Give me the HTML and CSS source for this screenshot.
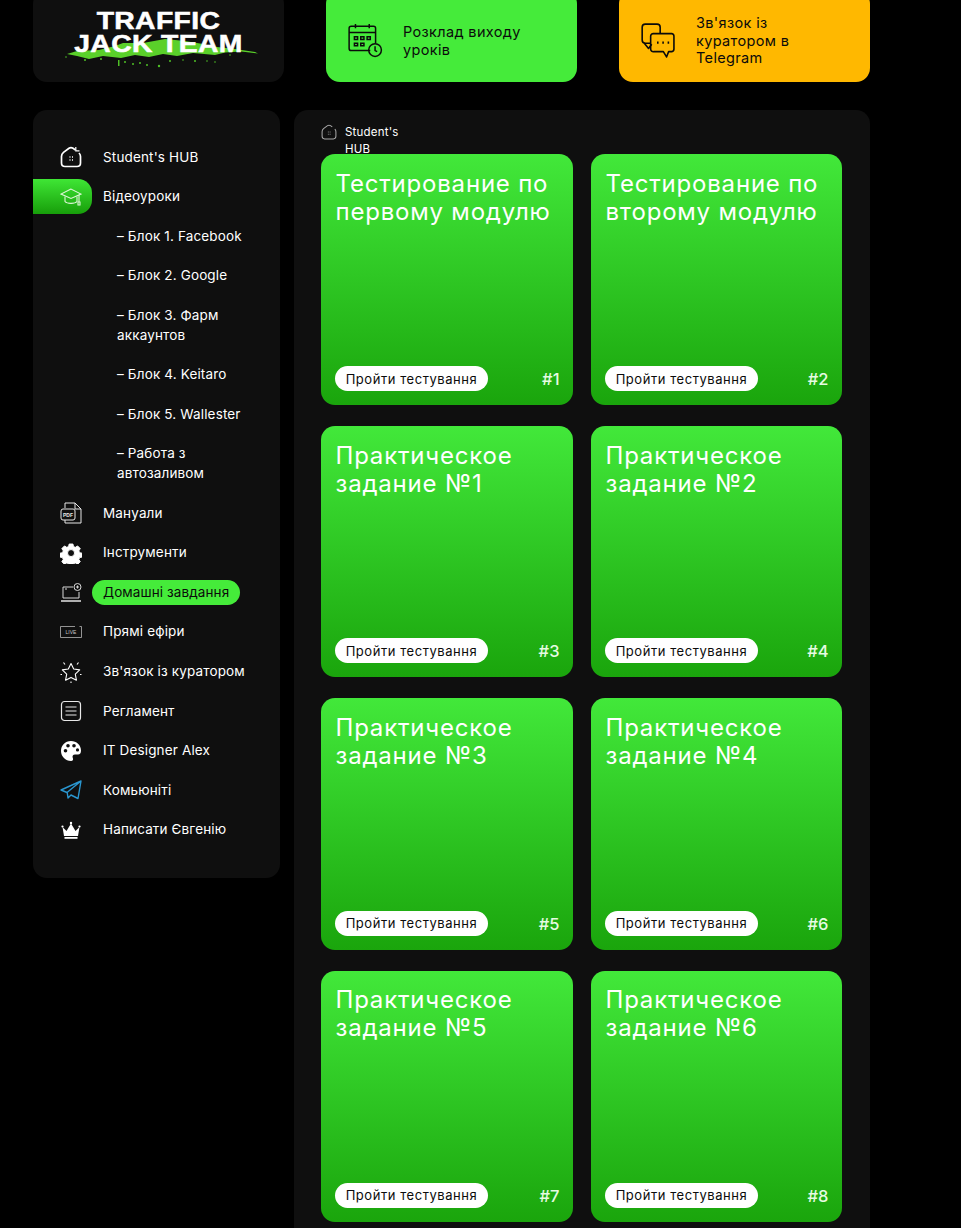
FILE: index.html
```html
<!DOCTYPE html>
<html lang="uk">
<head>
<meta charset="utf-8">
<title>Traffic Jack Team</title>
<link rel="stylesheet" href="styles.css">
</head>
<body>
<div class="page">
  <header class="top">
    <div class="logo">
      <svg class="brush" viewBox="0 0 195 30" aria-hidden="true">
        <path d="M2 16 L12 13 L34 12 L50 8 L58 5 L78 5 L100 1 L120 3 L138 6 L152 9 L170 11 L190 14 L193 15.500 L176 13.500 L160 14.500 L150 17 L128 15 L112 18 L98 16 L84 19 L70 17 L56 20 L38 18 L24 21 L12 18 Z" fill="#5ad02a"/>
        <g fill="#4fc026">
          <rect x="53" y="22" width="1.500" height="6"/><circle cx="60" cy="24" r="1"/><circle cx="68" cy="26" r="1"/><circle cx="75" cy="25" r="1"/><circle cx="82" cy="27" r="1"/><circle cx="94" cy="28" r="1.200"/><circle cx="105" cy="23" r="1"/><circle cx="118" cy="22" r=".8"/><circle cx="130" cy="23" r="1"/><circle cx="142" cy="23" r=".8"/><circle cx="150" cy="24" r=".8"/><circle cx="1" cy="19" r=".8"/><circle cx="20" cy="22" r="1"/><circle cx="36" cy="21" r="1"/><circle cx="165" cy="17" r=".8"/>
        </g>
      </svg>
      <div class="logo-text">TRAFFIC<br>JACK TEAM</div>
    </div>
    <a class="banner banner-green">
      <svg class="banner-icon" viewBox="0 0 34 34" fill="none" stroke="#0b0b0b" stroke-width="1.400" aria-hidden="true">
        <path d="M22 27H4a2 2 0 0 1-2-2V6a2 2 0 0 1 2-2h21a2 2 0 0 1 2 2v14"/>
        <path d="M2 10h25M8 2v4M21 2v4"/>
        <path d="M7 14h3v2.500H7zM13 14h3v2.500h-3zM19 14h3v2.500h-3zM7 20h3v2.500H7zM13 20h3v2.500h-3z"/>
        <circle cx="26.500" cy="26.500" r="6"/><path d="M26.500 23v4l2 1"/>
      </svg>
      <span class="banner-text banner-text-two">Розклад виходу уроків</span>
    </a>
    <a class="banner banner-orange">
      <svg class="banner-icon" viewBox="0 0 34 34" fill="none" stroke="#0b0b0b" stroke-width="1.500" stroke-linejoin="round" aria-hidden="true">
        <path d="M11 20H6a3 3 0 0 1-3-3V5a3 3 0 0 1 3-3h11a3 3 0 0 1 3 3v6"/>
        <path d="M5 20l4 5 3-4"/>
        <path d="M14 11h17a2.500 2.500 0 0 1 2 2.500v12a2.500 2.500 0 0 1-2 2.500h-3l-2 5-3-5h-9a2.500 2.500 0 0 1-3-2.500v-12a2.500 2.500 0 0 1 3-2.500z"/>
        <path d="M17 19.500h1.500M22 19.500h1.500M27 19.500h1.500" stroke-width="2"/>
      </svg>
      <span class="banner-text banner-text-three">Зв'язок із куратором в Telegram</span>
    </a>
  </header>

  <div class="columns">
    <nav class="side">
      <div class="row">
        <span class="cell"><svg class="ico" viewBox="0 0 22 22" fill="none" stroke="#fff" stroke-width="1.700" aria-hidden="true"><path d="M15.500 4 13 2.300Q11 1 9 2.300L3.500 6.300Q1.500 8 1.500 10.500V17Q1.500 20.500 5 20.500H17Q20.500 20.500 20.500 17V10.500Q20.500 8.500 19 7"/><path d="M15.800 1v3.800H19.500" stroke-width="1.200"/><path d="M9.500 11h1M12 11h1M9.500 14h1M12 14h1" stroke-width="1.400"/></svg></span>
        <span class="label">Student's HUB</span>
      </div>
      <div class="row">
        <span class="cell cell-active"><svg class="ico" viewBox="0 0 22 22" fill="none" stroke="#dff7d8" stroke-width="1.100" aria-hidden="true"><path d="M11 3 1 8l10 4.500L21 8z"/><path d="M5 10.500v5c2 2.500 10 2.500 12 0v-5"/><path d="M19 9v7M18 19h2v-3h-2z"/></svg></span>
        <span class="label">Відеоуроки</span>
      </div>
      <div class="sub">– Блок 1. Facebook</div>
      <div class="sub">– Блок 2. Google</div>
      <div class="sub">– Блок 3. Фарм<br>аккаунтов</div>
      <div class="sub">– Блок 4. Keitaro</div>
      <div class="sub">– Блок 5. Wallester</div>
      <div class="sub">– Работа з<br>автозаливом</div>
      <div class="row">
        <span class="cell"><svg class="ico" viewBox="0 0 22 22" fill="none" stroke="#e8e8e8" stroke-width="1" aria-hidden="true"><path d="M5 6V1h10l6 6v14H5v-3"/><path d="M15 1v6h6"/><rect x="1" y="7" width="14" height="11" rx="2"/><text x="8" y="14.500" text-anchor="middle" class="ico-text ico-bold" fill="#e8e8e8" stroke="none">PDF</text></svg></span>
        <span class="label">Мануали</span>
      </div>
      <div class="row">
        <span class="cell"><svg class="ico" viewBox="0 0 22 22" aria-hidden="true"><path fill="#fff" fill-rule="evenodd" stroke="#fff" stroke-width="1" stroke-linejoin="round" d="M9 1.500h4l.6 2.700 1.900.8 2.400-1.500 2.800 2.800-1.500 2.400.8 1.900 2.700.6v4l-2.700.6-.8 1.900 1.500 2.400-2.800 2.800-2.400-1.500-1.900.8-.6 2.700H9l-.6-2.700-1.900-.8-2.400 1.500-2.800-2.800 1.500-2.400-.8-1.900-2.700-.6v-4l2.700-.6.8-1.900-1.500-2.400 2.800-2.800 2.400 1.500 1.900-.8zM11 7.300a3.700 3.700 0 1 0 0 7.400 3.700 3.700 0 0 0 0-7.400z" transform="translate(.6 .6) scale(.95)"/></svg></span>
        <span class="label">Інструменти</span>
      </div>
      <div class="row">
        <span class="cell"><svg class="ico" viewBox="0 0 22 22" fill="none" stroke="#d8d8d8" stroke-width="1" aria-hidden="true"><path d="M13 5H3v11h16v-6"/><path d="M1 19h20" stroke-width="1.600"/><circle cx="17.500" cy="5" r="3.500"/><path d="M17.500 3.500v3M16 5h3"/><path d="M5 7h2"/></svg></span>
        <span class="label label-pill">Домашні завдання</span>
      </div>
      <div class="row">
        <span class="cell"><svg class="ico" viewBox="0 0 22 22" fill="none" stroke="#b5b5b5" stroke-width=".8" aria-hidden="true"><path d="M15 5.500H.5v11h21v-11h-2"/><text x="11" y="13" text-anchor="middle" class="ico-text" fill="#c5c5c5" stroke="none">LIVE</text></svg></span>
        <span class="label">Прямі ефіри</span>
      </div>
      <div class="row">
        <span class="cell"><svg class="ico" viewBox="0 0 22 22" fill="none" stroke="#fff" stroke-width="1.100" stroke-linejoin="round" aria-hidden="true"><path d="M11 2.500l2.700 5.500 6 .9-4.400 4.300 1.100 6L11 16.400l-5.400 2.800 1.100-6-4.400-4.300 6-.9z"/><path d="M3.500 1.500l1.500 2M18.500 1.500l-1.500 2M.5 13.500h1.500M20 13.500h1.500M11 20.500V22"/></svg></span>
        <span class="label">Зв'язок із куратором</span>
      </div>
      <div class="row">
        <span class="cell"><svg class="ico" viewBox="0 0 22 22" fill="none" stroke="#e8e8e8" stroke-width="1.200" aria-hidden="true"><rect x="1.500" y="1.500" width="19" height="19" rx="3"/><path d="M5.500 7h11M5.500 11h11M5.500 15h11"/></svg></span>
        <span class="label">Регламент</span>
      </div>
      <div class="row">
        <span class="cell"><svg class="ico" viewBox="0 0 22 22" aria-hidden="true"><path fill="#fff" fill-rule="evenodd" d="M11 1C5 1 1 5.500 1 11s4.500 10 10 10c2 0 2.500-1.500 1.800-3-.8-1.800.2-3.500 2.200-3.500h3c2 0 3-1.500 3-4C21 5 16.500 1 11 1zM5.500 12.500a1.800 1.800 0 1 1 0-3.600 1.800 1.800 0 0 1 0 3.600zM8 7.500a1.800 1.800 0 1 1 0-3.600 1.800 1.800 0 0 1 0 3.600zm6 0a1.800 1.800 0 1 1 0-3.600 1.800 1.800 0 0 1 0 3.600zm3.500 4a1.600 1.600 0 1 1 0-3.200 1.600 1.600 0 0 1 0 3.200z"/></svg></span>
        <span class="label">IT Designer Alex</span>
      </div>
      <div class="row">
        <span class="cell"><svg class="ico" viewBox="0 0 22 22" fill="none" stroke="#2a96cf" stroke-width="1.400" stroke-linejoin="round" aria-hidden="true"><path d="M21 2 1 11l6 2.500L21 2l-3 17.500-7-3.500-3 3-.8-5.500"/></svg></span>
        <span class="label">Комьюніті</span>
      </div>
      <div class="row">
        <span class="cell"><svg class="ico" viewBox="0 0 22 22" aria-hidden="true"><path fill="#fff" d="M2.500 8 6.500 12 11 4.500 15.500 12 19.500 8 18 17H4z"/><rect x="4.500" y="18" width="13" height="1.800" fill="#fff"/><circle cx="11" cy="4" r="1.200" fill="#fff"/><circle cx="2.500" cy="7.500" r="1.100" fill="#fff"/><circle cx="19.500" cy="7.500" r="1.100" fill="#fff"/></svg></span>
        <span class="label">Написати Євгенію</span>
      </div>
    </nav>

    <main class="panel">
      <div class="crumb">
        <svg class="crumb-icon" viewBox="0 0 22 22" fill="none" stroke="#a8a8a8" stroke-width="1.400" aria-hidden="true"><path d="M15.500 4 13 2.300Q11 1 9 2.300L3.500 6.300Q1.500 8 1.500 10.500V17Q1.500 20.500 5 20.500H17Q20.500 20.500 20.500 17V10.500Q20.500 8.500 19 7"/><path d="M9.500 11h1M12 11h1M9.500 14h1M12 14h1"/></svg>
        <span class="crumb-text">Student's<br>HUB</span>
      </div>
      <div class="grid">
        <article class="card"><h2 class="card-title">Тестирование по первому модулю</h2><div class="card-foot"><a class="pill">Пройти тестування</a><span class="num">#1</span></div></article>
        <article class="card"><h2 class="card-title">Тестирование по второму модулю</h2><div class="card-foot"><a class="pill">Пройти тестування</a><span class="num">#2</span></div></article>
        <article class="card"><h2 class="card-title">Практическое задание №1</h2><div class="card-foot"><a class="pill">Пройти тестування</a><span class="num">#3</span></div></article>
        <article class="card"><h2 class="card-title">Практическое задание №2</h2><div class="card-foot"><a class="pill">Пройти тестування</a><span class="num">#4</span></div></article>
        <article class="card"><h2 class="card-title">Практическое задание №3</h2><div class="card-foot"><a class="pill">Пройти тестування</a><span class="num">#5</span></div></article>
        <article class="card"><h2 class="card-title">Практическое задание №4</h2><div class="card-foot"><a class="pill">Пройти тестування</a><span class="num">#6</span></div></article>
        <article class="card"><h2 class="card-title">Практическое задание №5</h2><div class="card-foot"><a class="pill">Пройти тестування</a><span class="num">#7</span></div></article>
        <article class="card"><h2 class="card-title">Практическое задание №6</h2><div class="card-foot"><a class="pill">Пройти тестування</a><span class="num">#8</span></div></article>
      </div>
    </main>
  </div>
</div>
</body>
</html>
```
FILE: styles.css
```css
* { box-sizing: border-box; }
html, body { margin: 0; height: 100%; background: #000; overflow: hidden; }
body { font-family: "Inter", "Liberation Sans", sans-serif; color: #fff; }
.page { height: 1228px; overflow: hidden; padding-left: 33px; width: 870px; }
.top { display: grid; grid-template-columns: 251px 251px 251px; column-gap: 42px; height: 92px; margin-top: -10px; }
.logo { background: #0f0f0f; border-radius: 14px; position: relative; display: flex; align-items: flex-start; justify-content: center; padding-top: 20px; }
.logo-text { position: relative; font-family: "Liberation Sans", sans-serif; font-weight: 700; font-size: 23px; line-height: 23px; text-align: center; letter-spacing: .3px; transform: scaleX(1.23); -webkit-text-stroke: .5px #fff; }
.brush { position: absolute; left: 32px; top: 48px; width: 195px; height: 30px; }
.banner { border-radius: 14px; display: flex; align-items: center; padding-top: 9px; color: #0b0b0b; font-size: 14.500px; line-height: 17.500px; letter-spacing: .35px; }
.banner-green { background: #45eb3a; padding-left: 21px; }
.banner-orange { background: #ffb800; padding-left: 20px; }
.banner-icon { width: 36px; height: 36px; flex: none; margin-bottom: 2px; }
.banner-text-two { margin-left: 20px; width: 140px; }
.banner-text-three { margin-left: 21px; width: 120px; }
.columns { display: flex; gap: 14px; margin-top: 28px; align-items: flex-start; }
.side { width: 247px; background: #0f0f0f; border-radius: 14px; padding: 27.600px 0 27.700px; flex: none; }
.row { display: flex; align-items: center; height: 39.600px; }
.cell { width: 59px; height: 35px; padding-left: 27px; display: flex; align-items: center; flex: none; }
.cell-active { background: linear-gradient(180deg, #3fe635, #179e0a); border-radius: 0 14px 14px 0; }
.ico { width: 22px; height: 22px; display: block; }
.ico-text { font-family: "Liberation Sans", sans-serif; font-size: 5px; }
.ico-bold { font-weight: 700; }
.label { padding: 0 11px; font-size: 13.500px; line-height: 19.600px; letter-spacing: .15px; white-space: nowrap; }
.label-pill { background: #45eb3a; color: #0b0b0b; border-radius: 13px; padding: 3px 11px; letter-spacing: .1px; }
.sub { padding: 10px 0 10px 84px; font-size: 13.500px; line-height: 19.600px; letter-spacing: .15px; }
.panel { width: 576px; height: 1200px; background: #0f0f0f; border-radius: 14px; padding: 14px 28px 0 27px; }
.crumb { display: flex; height: 30px; align-items: flex-start; gap: 8px; }
.crumb-icon { width: 16px; height: 16px; flex: none; }
.crumb-text { font-size: 11.500px; line-height: 17px; letter-spacing: .2px; }
.grid { display: grid; grid-template-columns: 252px 251px; column-gap: 18px; row-gap: 21px; position: relative; }
.card { height: 251.200px; border-radius: 14px; background: linear-gradient(180deg, #42e83a, #1aa50c); padding: 15.500px 13.500px 14px 14.500px; display: flex; flex-direction: column; justify-content: space-between; }
.card-title { margin: 0; font-weight: 400; font-size: 24px; line-height: 28px; letter-spacing: .8px; }
.card-foot { display: flex; align-items: center; justify-content: space-between; margin-left: -.5px; }
.pill { background: #fff; color: #0b0b0b; border-radius: 13px; height: 25px; width: 153px; display: flex; align-items: center; justify-content: center; font-size: 13px; letter-spacing: .55px; white-space: nowrap; }
.num { font-size: 16.500px; font-weight: 500; color: #e6fbe2; margin-top: 1px; }
```
